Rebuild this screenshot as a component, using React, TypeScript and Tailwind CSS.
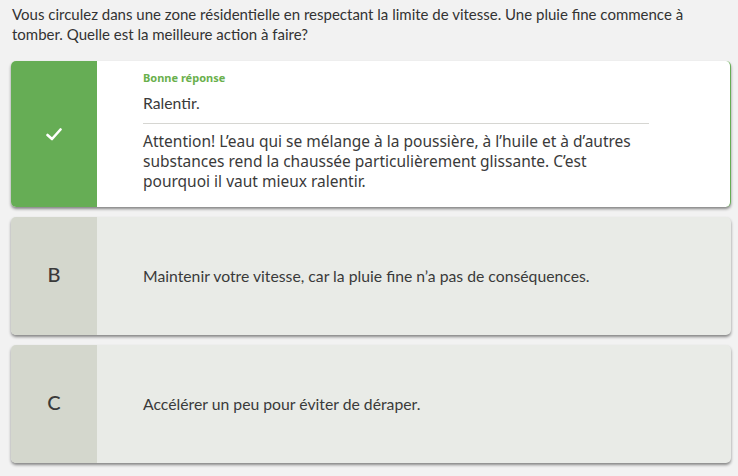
import React from "react";

const lato = { fontFamily: "Lato, 'Open Sans', sans-serif" };
const ubu = { fontFamily: "'Noto Sans', 'DejaVu Sans', sans-serif" };

function Option({ letter, text }: { letter: string; text: string }) {
  return (
    <div className="flex h-[118px] rounded-[5px] overflow-hidden bg-[#e9ebe7] shadow-[0_2px_3px_rgba(0,0,0,0.45)]">
      <div className="w-[86px] shrink-0 bg-[#d4d7cd] flex items-center justify-center pb-[5px] text-[20px] font-medium text-[#3a3a3a]" style={lato}>
        {letter}
      </div>
      <div className="flex items-center pl-[46px] text-[15.75px] text-[#3a3a3a]" style={lato}>
        {text}
      </div>
    </div>
  );
}

export default function App() {
  return (
    <div className="w-[738px] h-[476px] bg-[#f2f2f2] overflow-hidden">
      <p className="px-3 pt-[4px] text-[15px] leading-[20px] text-[#333333] w-[730px]" style={lato}>
        Vous circulez dans une zone résidentielle en respectant la limite de vitesse. Une pluie fine commence à tomber. Quelle est la meilleure action à faire?
      </p>
      <div className="ml-[11px] mr-[7px] mt-[17px] flex flex-col gap-[10px]">
        <div className="flex h-[146px] rounded-[5px] overflow-hidden bg-white border-r border-[#66ad55] shadow-[0_2px_3px_rgba(0,0,0,0.45)]">
          <div className="w-[86px] shrink-0 bg-[#66ad55] flex items-center justify-center">
            <svg width="16" height="13" viewBox="0 0 16 13">
              <path d="M1.5 7 L6 11 L14.5 1.5" fill="none" stroke="white" strokeWidth="2.6" strokeLinecap="round" strokeLinejoin="round" />
            </svg>
          </div>
          <div className="pl-[46px] pt-[9px] w-[552px]">
            <div className="text-[11px] leading-[16px] font-bold text-[#6ab04c]" style={ubu}>Bonne réponse</div>
            <div className="mt-[6px] text-[15.75px] leading-[22px] text-[#3a3a3a] pb-[9px] border-b border-[#d6d6d2]" style={lato}>Ralentir.</div>
            <div className="mt-[7px] text-[15.5px] leading-[20px] text-[#3a3a3a]" style={ubu}>
              Attention! L’eau qui se mélange à la poussière, à l’huile et à d’autres<br />substances rend la chaussée particulièrement glissante. C’est<br />pourquoi il vaut mieux ralentir.
            </div>
          </div>
        </div>
        <Option letter="B" text="Maintenir votre vitesse, car la pluie fine n’a pas de conséquences." />
        <Option letter="C" text="Accélérer un peu pour éviter de déraper." />
      </div>
    </div>
  );
}
